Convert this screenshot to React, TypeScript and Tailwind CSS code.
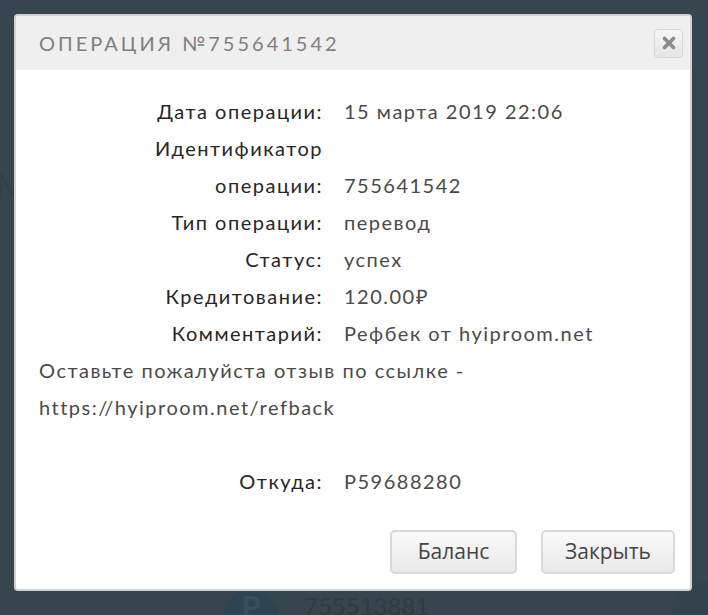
import React from 'react';

const rows: { label: React.ReactNode; value: string }[] = [
  { label: 'Дата операции:', value: '15 марта 2019 22:06' },
  {
    label: (
      <>
        Идентификатор
        <br />
        операции:
      </>
    ),
    value: '755641542',
  },
  { label: 'Тип операции:', value: 'перевод' },
  { label: 'Статус:', value: 'успех' },
  { label: 'Кредитование:', value: '120.00₽' },
  { label: 'Комментарий:', value: 'Рефбек от hyiproom.net' },
];

const Row: React.FC<{ label: React.ReactNode; value: string }> = ({ label, value }) => (
  <div className="flex items-end">
    <div className="w-[284px] shrink-0 text-right text-[#262626]">{label}</div>
    <div className="pl-[21px] text-[#4a4a4a]">{value}</div>
  </div>
);

const App: React.FC = () => {
  return (
    <div className="relative h-[615px] w-[708px] overflow-hidden bg-[#37464e] pt-[14px] pl-[14px]">
      {/* page behind the overlay */}
      <div className="absolute left-[-4px] top-[160px] font-['Lato',sans-serif] text-[34px] text-[#324048]">M</div>
      <div className="absolute left-[223px] top-[589px] flex h-[56px] w-[56px] items-start justify-center rounded-full bg-[#2d4553] pt-[2px] font-['Lato',sans-serif] text-[30px] font-bold leading-none text-[#38505e]">
        P
      </div>
      <div className="absolute left-[304px] top-[588px] font-['Lato',sans-serif] text-[24px] text-[#2f3c43]">755513881</div>
      <div className="absolute left-[672px] top-[582px] h-[60px] w-[60px] rounded-full bg-[#34444c]" />

      <div className="relative flex h-[577px] w-[678px] flex-col rounded-[4px] border-2 border-[#d2d2d2] bg-white">
        <div className="flex h-[54px] items-center justify-between rounded-t-[2px] bg-[#efefef] pl-[23px] pr-[7px]">
          <h2 className="font-['Lato',sans-serif] text-[20px] tracking-[3px] text-[#7f7f7f]">ОПЕРАЦИЯ №755641542</h2>
          <button className="flex h-[29px] w-[29px] items-center justify-center rounded-[4px] border border-[#d6d6d6] bg-gradient-to-b from-[#f6f6f6] to-[#e6e6e6]">
            <svg width="14" height="14" viewBox="0 0 14 14">
              <path d="M2.5 2.5 L11.5 11.5 M11.5 2.5 L2.5 11.5" stroke="#8a8a8a" strokeWidth="3.6" strokeLinecap="round" />
            </svg>
          </button>
        </div>

        <div className="flex flex-1 flex-col px-[23px] pt-[23px] font-['Lato',sans-serif] text-[20px] leading-[37px] tracking-[1.5px]">
          {rows.map((r, i) => (
            <Row key={i} label={r.label} value={r.value} />
          ))}
          <p className="text-[#4a4a4a]">
            Оставьте пожалуйста отзыв по ссылке -
            <br />
            https://hyiproom.net/refback
          </p>
          <div className="h-[37px]" />
          <Row label="Откуда:" value="P59688280" />
        </div>

        <div className="flex justify-end gap-[24px] pb-[15px] pr-[15px]">
          <button className="h-[44px] w-[127px] rounded-[5px] border-2 border-[#d9d9d9] bg-gradient-to-b from-[#fafafa] to-[#e9e9e9] font-['Open_Sans',sans-serif] text-[21px] text-[#444]">
            Баланс
          </button>
          <button className="h-[44px] w-[134px] rounded-[5px] border-2 border-[#d9d9d9] bg-gradient-to-b from-[#fafafa] to-[#e9e9e9] font-['Open_Sans',sans-serif] text-[21px] text-[#444]">
            Закрыть
          </button>
        </div>
      </div>
    </div>
  );
};

export default App;
